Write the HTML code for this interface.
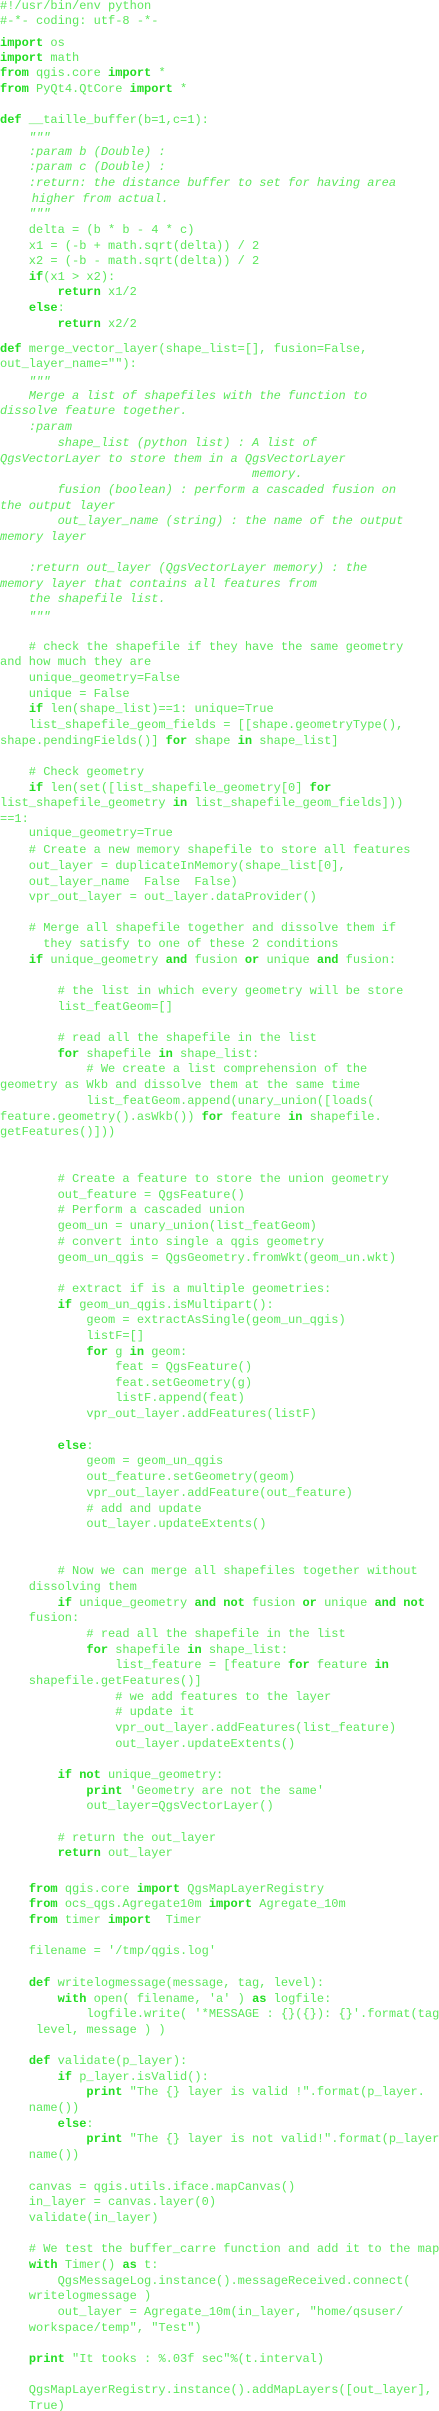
<!DOCTYPE html>
<html><head><meta charset="utf-8"><style>
html,body{margin:0;padding:0;background:#fff;width:439px;height:2411px;overflow:hidden}
body{position:relative;font-family:"Liberation Mono",monospace;font-size:12px;color:#5ce85c}
div{position:absolute;left:0;white-space:pre;line-height:16px;height:16px}
b{color:#22dd22;font-weight:bold}
i{font-style:italic}
</style></head><body>
<div style="top:-2px">#!/usr/bin/env python</div>
<div style="top:13px">#-*- coding: utf-8 -*-</div>
<div style="top:35px"><b>import</b> os</div>
<div style="top:50px"><b>import</b> math</div>
<div style="top:65px"><b>from</b> qgis.core <b>import</b> *</div>
<div style="top:81px"><b>from</b> PyQt4.QtCore <b>import</b> *</div>
<div style="top:112px"><b>def</b> __taille_buffer(b=1,c=1):</div>
<div style="top:130px"><i>    """</i></div>
<div style="top:144px"><i>    :param b (Double) :</i></div>
<div style="top:159px"><i>    :param c (Double) :</i></div>
<div style="top:175px"><i>    :return: the distance buffer to set for having area</i></div>
<div style="top:191px;left:3px"><i>    higher from actual.</i></div>
<div style="top:206px"><i>    """</i></div>
<div style="top:222px">    delta = (b * b - 4 * c)</div>
<div style="top:238px">    x1 = (-b + math.sqrt(delta)) / 2</div>
<div style="top:253px">    x2 = (-b - math.sqrt(delta)) / 2</div>
<div style="top:269px">    <b>if</b>(x1 &gt; x2):</div>
<div style="top:284px">        <b>return</b> x1/2</div>
<div style="top:300px">    <b>else</b>:</div>
<div style="top:316px">        <b>return</b> x2/2</div>
<div style="top:341px"><b>def</b> merge_vector_layer(shape_list=[], fusion=False,</div>
<div style="top:356px">out_layer_name=""):</div>
<div style="top:374px"><i>    """</i></div>
<div style="top:388px"><i>    Merge a list of shapefiles with the function to</i></div>
<div style="top:403px"><i>dissolve feature together.</i></div>
<div style="top:419px"><i>    :param</i></div>
<div style="top:435px"><i>        shape_list (python list) : A list of</i></div>
<div style="top:451px"><i>QgsVectorLayer to store them in a QgsVectorLayer</i></div>
<div style="top:466px"><i>                                   memory.</i></div>
<div style="top:482px"><i>        fusion (boolean) : perform a cascaded fusion on</i></div>
<div style="top:498px"><i>the output layer</i></div>
<div style="top:513px"><i>        out_layer_name (string) : the name of the output</i></div>
<div style="top:529px"><i>memory layer</i></div>
<div style="top:560px"><i>    :return out_layer (QgsVectorLayer memory) : the</i></div>
<div style="top:576px"><i>memory layer that contains all features from</i></div>
<div style="top:591px"><i>    the shapefile list.</i></div>
<div style="top:609px"><i>    """</i></div>
<div style="top:639px">    # check the shapefile if they have the same geometry</div>
<div style="top:654px">and how much they are</div>
<div style="top:670px">    unique_geometry=False</div>
<div style="top:686px">    unique = False</div>
<div style="top:701px">    <b>if</b> len(shape_list)==1: unique=True</div>
<div style="top:717px">    list_shapefile_geom_fields = [[shape.geometryType(),</div>
<div style="top:733px">shape.pendingFields()] <b>for</b> shape <b>in</b> shape_list]</div>
<div style="top:764px">    # Check geometry</div>
<div style="top:780px">    <b>if</b> len(set([list_shapefile_geometry[0] <b>for</b></div>
<div style="top:795px">list_shapefile_geometry <b>in</b> list_shapefile_geom_fields]))</div>
<div style="top:811px">==1:</div>
<div style="top:825px">    unique_geometry=True</div>
<div style="top:842px">    # Create a new memory shapefile to store all features</div>
<div style="top:858px">    out_layer = duplicateInMemory(shape_list[0],</div>
<div style="top:874px">    out_layer_name  False  False)</div>
<div style="top:889px">    vpr_out_layer = out_layer.dataProvider()</div>
<div style="top:920px">    # Merge all shapefile together and dissolve them if</div>
<div style="top:936px">      they satisfy to one of these 2 conditions</div>
<div style="top:952px">    <b>if</b> unique_geometry <b>and</b> fusion <b>or</b> unique <b>and</b> fusion:</div>
<div style="top:983px">        # the list in which every geometry will be store</div>
<div style="top:999px">        list_featGeom=[]</div>
<div style="top:1030px">        # read all the shapefile in the list</div>
<div style="top:1046px">        <b>for</b> shapefile <b>in</b> shape_list:</div>
<div style="top:1061px">            # We create a list comprehension of the</div>
<div style="top:1077px">geometry as Wkb and dissolve them at the same time</div>
<div style="top:1093px">            list_featGeom.append(unary_union([loads(</div>
<div style="top:1109px">feature.geometry().asWkb()) <b>for</b> feature <b>in</b> shapefile.</div>
<div style="top:1124px">getFeatures()]))</div>
<div style="top:1171px">        # Create a feature to store the union geometry</div>
<div style="top:1187px">        out_feature = QgsFeature()</div>
<div style="top:1202px">        # Perform a cascaded union</div>
<div style="top:1218px">        geom_un = unary_union(list_featGeom)</div>
<div style="top:1234px">        # convert into single a qgis geometry</div>
<div style="top:1250px">        geom_un_qgis = QgsGeometry.fromWkt(geom_un.wkt)</div>
<div style="top:1281px">        # extract if is a multiple geometries:</div>
<div style="top:1297px">        <b>if</b> geom_un_qgis.isMultipart():</div>
<div style="top:1312px">            geom = extractAsSingle(geom_un_qgis)</div>
<div style="top:1328px">            listF=[]</div>
<div style="top:1344px">            <b>for</b> g <b>in</b> geom:</div>
<div style="top:1359px">                feat = QgsFeature()</div>
<div style="top:1375px">                feat.setGeometry(g)</div>
<div style="top:1390px">                listF.append(feat)</div>
<div style="top:1406px">            vpr_out_layer.addFeatures(listF)</div>
<div style="top:1438px">        <b>else</b>:</div>
<div style="top:1453px">            geom = geom_un_qgis</div>
<div style="top:1469px">            out_feature.setGeometry(geom)</div>
<div style="top:1485px">            vpr_out_layer.addFeature(out_feature)</div>
<div style="top:1501px">            # add and update</div>
<div style="top:1516px">            out_layer.updateExtents()</div>
<div style="top:1563px">        # Now we can merge all shapefiles together without</div>
<div style="top:1579px">    dissolving them</div>
<div style="top:1595px">        <b>if</b> unique_geometry <b>and not</b> fusion <b>or</b> unique <b>and not</b></div>
<div style="top:1610px">    fusion:</div>
<div style="top:1626px">            # read all the shapefile in the list</div>
<div style="top:1642px">            <b>for</b> shapefile <b>in</b> shape_list:</div>
<div style="top:1657px">                list_feature = [feature <b>for</b> feature <b>in</b></div>
<div style="top:1673px">    shapefile.getFeatures()]</div>
<div style="top:1689px">                # we add features to the layer</div>
<div style="top:1704px">                # update it</div>
<div style="top:1720px">                vpr_out_layer.addFeatures(list_feature)</div>
<div style="top:1736px">                out_layer.updateExtents()</div>
<div style="top:1767px">        <b>if not</b> unique_geometry:</div>
<div style="top:1783px">            <b>print</b> 'Geometry are not the same'</div>
<div style="top:1798px">            out_layer=QgsVectorLayer()</div>
<div style="top:1830px">        # return the out_layer</div>
<div style="top:1845px">        <b>return</b> out_layer</div>
<div style="top:1881px">    <b>from</b> qgis.core <b>import</b> QgsMapLayerRegistry</div>
<div style="top:1896px">    <b>from</b> ocs_qgs.Agregate10m <b>import</b> Agregate_10m</div>
<div style="top:1912px">    <b>from</b> timer <b>import</b>  Timer</div>
<div style="top:1943px">    filename = '/tmp/qgis.log'</div>
<div style="top:1975px">    <b>def</b> writelogmessage(message, tag, level):</div>
<div style="top:1991px">        <b>with</b> open( filename, 'a' ) <b>as</b> logfile:</div>
<div style="top:2006px">            logfile.write( '*MESSAGE : {}({}): {}'.format(tag</div>
<div style="top:2022px">     level, message ) )</div>
<div style="top:2053px">    <b>def</b> validate(p_layer):</div>
<div style="top:2069px">        <b>if</b> p_layer.isValid():</div>
<div style="top:2084px">            <b>print</b> "The {} layer is valid !".format(p_layer.</div>
<div style="top:2100px">    name())</div>
<div style="top:2116px">        <b>else</b>:</div>
<div style="top:2131px">            <b>print</b> "The {} layer is not valid!".format(p_layer.</div>
<div style="top:2147px">    name())</div>
<div style="top:2179px">    canvas = qgis.utils.iface.mapCanvas()</div>
<div style="top:2194px">    in_layer = canvas.layer(0)</div>
<div style="top:2210px">    validate(in_layer)</div>
<div style="top:2241px">    # We test the buffer_carre function and add it to the map</div>
<div style="top:2257px">    <b>with</b> Timer() <b>as</b> t:</div>
<div style="top:2273px">        QgsMessageLog.instance().messageReceived.connect(</div>
<div style="top:2288px">    writelogmessage )</div>
<div style="top:2304px">        out_layer = Agregate_10m(in_layer, "home/qsuser/</div>
<div style="top:2320px">    workspace/temp", "Test")</div>
<div style="top:2351px">    <b>print</b> "It tooks : %.03f sec"%(t.interval)</div>
<div style="top:2382px">    QgsMapLayerRegistry.instance().addMapLayers([out_layer],</div>
<div style="top:2398px">    True)</div>
</body></html>
